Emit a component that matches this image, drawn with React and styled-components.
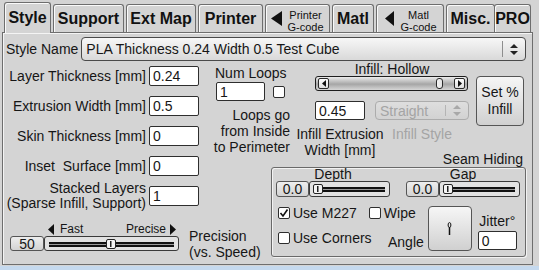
import React from 'react'
import styled, { createGlobalStyle } from 'styled-components'

const GlobalStyle = createGlobalStyle`
  html, body { margin: 0; padding: 0; }
  body {
    background: #d4d4d4;
    font-family: "Liberation Sans", Arial, sans-serif;
    color: #161616;
  }
`

const Frame = styled.div`
  width: 539px;
  height: 270px;
  overflow: hidden;
  display: flex;
  flex-direction: column;
  background: #d4d4d4;
`

const TabBar = styled.div`
  position: relative;
  z-index: 1;
  display: flex;
  align-items: flex-end;
  gap: 2px;
  height: 32px;
  padding-left: 4px;
  box-sizing: border-box;
`

const Tab = styled.div`
  width: ${p => p.$w}px;
  height: ${p => (p.$active ? 31 : 28)}px;
  margin-bottom: ${p => (p.$active ? -1 : 0)}px;
  margin-left: ${p => (p.$flush ? -3 : 0)}px;
  box-sizing: border-box;
  border: 1px solid #6e6e6e;
  border-bottom: none;
  border-radius: 3px 3px 0 0;
  box-shadow: inset 1px 1px 0 #fafafa;
  background: #d4d4d4;
  display: flex;
  align-items: center;
  justify-content: ${p => (p.$arrow ? 'flex-start' : 'center')};
  padding-left: ${p => p.$pad || 0}px;
  font-size: 16px;
  font-weight: bold;
  color: #111;
`

const TabLines = styled.div`
  flex: 1;
  padding-top: 4px;
  font-size: 11px;
  font-weight: normal;
  line-height: 12px;
  text-align: center;
`

const Panel = styled.div`
  margin-left: 2px;
  width: 531px;
  height: 233px;
  box-sizing: border-box;
  border: 1px solid #6e6e6e;
  box-shadow: inset 1px 1px 0 #f4f4f4;
  display: flex;
  flex-direction: column;
`

const BlueStrip = styled.div`
  margin-top: 1px;
  height: 4px;
  background: #c5d9ee;
`

const StyleRow = styled.div`
  margin-top: 4px;
  height: 24px;
  display: flex;
  align-items: center;
  padding-left: 3px;
`

const Text = styled.span`
  font-size: ${p => p.$size || 14}px;
  line-height: ${p => p.$lh || 16}px;
  white-space: pre;
  color: ${p => (p.$muted ? '#a4a4a4' : '#161616')};
  text-align: ${p => p.$align || 'left'};
`

const Select = styled.div`
  width: ${p => p.$w}px;
  height: ${p => p.$h}px;
  margin-left: ${p => p.$ml || 0}px;
  box-sizing: border-box;
  display: flex;
  align-items: center;
  padding-left: 4px;
  border: 1px solid ${p => (p.$disabled ? '#acacac' : '#4a4a4a')};
  border-radius: 4px;
  background: ${p =>
    p.$disabled ? 'linear-gradient(#dedede, #d2d2d2)' : 'linear-gradient(#f7f7f7, #d9d9d9)'};
  font-size: 14px;
  color: ${p => (p.$disabled ? '#a4a4a4' : '#161616')};
  white-space: nowrap;
`

const SelectArrows = styled.div`
  margin-left: auto;
  width: 22px;
  height: calc(100% - 6px);
  border-left: 1px solid ${p => (p.$disabled ? '#b4b4b4' : '#8e8e8e')};
  display: flex;
  align-items: center;
  justify-content: center;
`

const Body = styled.div`
  margin-top: 1px;
  display: grid;
  grid-template-columns: 197px 68px 32px 232px;
  grid-template-rows: 88px 62px 52px;
`

const FieldsArea = styled.div`
  grid-column: 1;
  grid-row: 1 / span 2;
  padding: 4px 1px 0 0;
  display: flex;
  flex-direction: column;
  gap: 10px;
`

const FieldRow = styled.div`
  display: flex;
  justify-content: flex-end;
  align-items: center;
  gap: 3px;
  margin-top: ${p => (p.$tall ? -5 : 0)}px;
`

const Input = styled.input`
  width: ${p => p.$w}px;
  height: ${p => p.$h || 20}px;
  margin: 0;
  box-sizing: border-box;
  border: 1px solid #2e2e2e;
  border-radius: 2px;
  padding: 0 3px;
  background: #fff;
  font-family: "Liberation Sans", Arial, sans-serif;
  font-size: 14px;
  color: #161616;
  outline: none;
`

const MidArea = styled.div`
  grid-column: 2 / span 2;
  grid-row: 1;
  display: flex;
  flex-direction: column;
  align-items: flex-start;
`

const LoopsRow = styled.div`
  margin: 1px 0 0 16px;
  display: flex;
  align-items: center;
  gap: 8px;
`

const InfillArea = styled.div`
  grid-column: 4;
  grid-row: 1;
  padding-left: 15px;
  display: flex;
  align-items: flex-start;
`

const InfillMain = styled.div`
  width: 154px;
  display: flex;
  flex-direction: column;
`

const ScrollBar = styled.div`
  position: relative;
  width: 153px;
  height: 15px;
  box-sizing: border-box;
  border: 1px solid #1e1e1e;
  border-radius: 3px;
  background: linear-gradient(#ececec, #a6a6a6 55%, #d6d6d6);
  display: flex;
  align-items: center;
  justify-content: space-between;
  padding: 0 2px;
`

const ScrollBtn = styled.div`
  width: 11px;
  height: 11px;
  box-sizing: border-box;
  border: 1px solid #2a2a2a;
  border-radius: 2px;
  background: linear-gradient(#fdfdfd, #dedede);
  display: flex;
  align-items: center;
  justify-content: center;
`

const ScrollThumb = styled.div`
  position: absolute;
  top: 1px;
  bottom: 1px;
  width: 7px;
  box-sizing: border-box;
  border: 1px solid #2a2a2a;
  border-radius: 3px;
  background: linear-gradient(90deg, #f4f4f4, #e2e2e2);
`

const ControlsRow = styled.div`
  margin-top: 10px;
  display: flex;
  gap: 10px;
`

const ControlCol = styled.div`
  width: ${p => p.$w}px;
  display: flex;
  flex-direction: column;
  align-items: center;
  gap: 6px;
`

const Button = styled.div`
  width: ${p => p.$w}px;
  height: ${p => p.$h}px;
  margin: ${p => p.$m || 0};
  box-sizing: border-box;
  border: 1px solid #555;
  border-radius: 4px;
  background: linear-gradient(#f6f6f6, #d0d0d0);
  display: flex;
  align-items: center;
  justify-content: center;
  font-size: 14px;
  line-height: 17px;
  text-align: center;
`

const SeamArea = styled.div`
  grid-column: 3 / span 2;
  grid-row: 2 / span 2;
  display: flex;
  flex-direction: column;
`

const Group = styled.div`
  margin: 1px 6px 0 3px;
  height: 90px;
  box-sizing: border-box;
  border: 1px solid #6a6a6a;
  border-radius: 3px;
  box-shadow: inset 1px 1px 0 #f2f2f2, 1px 1px 0 #f2f2f2;
  padding: 0 5px 0 4px;
  display: flex;
  flex-direction: column;
`

const SliderPair = styled.div`
  display: flex;
  gap: 16px;
`

const SliderCol = styled.div`
  width: 114px;
  display: flex;
  flex-direction: column;
  align-items: stretch;
`

const SliderBox = styled.div`
  display: flex;
  height: ${p => p.$h}px;
`

const ValueBox = styled.div`
  width: ${p => p.$w}px;
  box-sizing: border-box;
  border: 1px solid #555;
  border-radius: 3px;
  background: linear-gradient(#eeeeee, #d3d3d3);
  display: flex;
  align-items: center;
  justify-content: center;
  font-size: 14px;
`

const Track = styled.div`
  position: relative;
  flex: 1;
  box-sizing: border-box;
  border: 1px solid #3a3a3a;
  border-radius: 3px;
  background: #e2e2e2;

  &::before {
    content: '';
    position: absolute;
    left: 4px;
    right: 4px;
    top: calc(50% - 2px);
    height: 1px;
    border-top: 2px solid #111;
    border-bottom: 2px solid #111;
    background: #9a9a9a;
  }
`

const Thumb = styled.div`
  position: absolute;
  top: 50%;
  transform: translateY(-50%);
  width: 10px;
  height: 10px;
  box-sizing: border-box;
  border: 1px solid #222;
  border-radius: 2px;
  background: #f4f4f4;
  display: flex;
  align-items: center;
  justify-content: center;

  &::after {
    content: '';
    width: 2px;
    height: 6px;
    border-left: 1px solid #222;
    border-right: 1px solid #888;
    box-sizing: border-box;
  }
`

const SeamBottom = styled.div`
  margin-top: 9px;
  display: flex;
  align-items: flex-start;
`

const ChecksCol = styled.div`
  width: 110px;
  padding-left: 2px;
  display: flex;
  flex-direction: column;
  gap: 11px;
`

const CheckRow = styled.div`
  display: flex;
  gap: 12px;
`

const CheckItem = styled.div`
  height: 14px;
  display: flex;
  align-items: center;
  gap: 3px;
`

const Box = styled.div`
  width: 12px;
  height: 12px;
  box-sizing: border-box;
  border: 1px solid #2e2e2e;
  border-radius: 2px;
  background: #fff;
  display: flex;
  align-items: center;
  justify-content: center;
`

const AngleLabel = styled(Text)`
  align-self: flex-end;
  margin-bottom: 1px;
`

const JitterCol = styled.div`
  align-self: flex-end;
  margin: 0 0 1px 6px;
  width: 39px;
  display: flex;
  flex-direction: column;
  align-items: center;
  gap: 2px;
`

const PrecisionArea = styled.div`
  grid-column: 1 / span 2;
  grid-row: 3;
  padding: 10px 0 0 7px;
  display: flex;
  align-items: flex-start;
`

const PrecisionSlider = styled.div`
  width: 169px;
  display: flex;
  flex-direction: column;
`

const SpeedRow = styled.div`
  margin-left: 38px;
  width: 128px;
  height: 14px;
  display: flex;
  justify-content: space-between;
  align-items: center;
  font-size: 12px;
`

const SpeedTag = styled.span`
  display: flex;
  align-items: center;
  gap: ${p => p.$gap}px;
`

const Tri = ({ dir = 'left', w = 6, h = 11 }) => (
  <svg width={w} height={h} viewBox={`0 0 ${w} ${h}`}>
    <polygon
      points={dir === 'left' ? `${w},0 0,${h / 2} ${w},${h}` : `0,0 ${w},${h / 2} 0,${h}`}
      fill="#111"
    />
  </svg>
)

const UpDown = ({ color = '#222' }) => (
  <svg width="8" height="11" viewBox="0 0 8 11">
    <polygon points="0,4 4,0 8,4" fill={color} />
    <polygon points="0,7 8,7 4,11" fill={color} />
  </svg>
)

const Tick = () => (
  <svg width="10" height="10" viewBox="0 0 10 10">
    <polyline points="1.5,5 4,8 8.5,1.5" fill="none" stroke="#111" strokeWidth="1.6" />
  </svg>
)

const Needle = () => (
  <svg width="5" height="14" viewBox="0 0 5 14">
    <ellipse cx="2.5" cy="3" rx="1.4" ry="2.4" fill="none" stroke="#111" strokeWidth="1" />
    <line x1="2.5" y1="5" x2="2.5" y2="13" stroke="#111" strokeWidth="1.5" />
  </svg>
)

function Slider({ value, boxW, h, pct }) {
  return (
    <SliderBox $h={h}>
      <ValueBox $w={boxW}>{value}</ValueBox>
      <Track>
        <Thumb style={{ left: `calc(3px + ${pct} * (100% - 18px))` }} />
      </Track>
    </SliderBox>
  )
}

function Check({ label, checked }) {
  return (
    <CheckItem>
      <Box>{checked && <Tick />}</Box>
      <Text>{label}</Text>
    </CheckItem>
  )
}

const tabs = [
  { label: 'Style', w: 47, active: true },
  { label: 'Support', w: 71 },
  { label: 'Ext Map', w: 70 },
  { label: 'Printer', w: 65 },
  { lines: ['Printer', 'G-code'], w: 65, pad: 5, tri: 11 },
  { label: 'Matl', w: 42 },
  { lines: ['Matl', 'G-code'], w: 68, pad: 8, tri: 9 },
  { label: 'Misc.', w: 49 },
  { label: 'PRO', w: 37, flush: true },
]

const fields = [
  { label: 'Layer Thickness [mm]', value: '0.24' },
  { label: 'Extrusion Width [mm]', value: '0.5' },
  { label: 'Skin Thickness [mm]', value: '0' },
  { label: 'Inset  Surface [mm]', value: '0' },
  { label: 'Stacked Layers\n(Sparse Infill, Support)', value: '1', tall: true },
]

export default function App() {
  return (
    <Frame>
      <GlobalStyle />
      <TabBar>
        {tabs.map((t, i) => (
          <Tab key={i} $w={t.w} $active={t.active} $flush={t.flush} $arrow={!!t.lines} $pad={t.pad}>
            {t.lines ? (
              <>
                <Tri w={t.tri} h={15} />
                <TabLines>
                  {t.lines[0]}
                  <br />
                  {t.lines[1]}
                </TabLines>
              </>
            ) : (
              t.label
            )}
          </Tab>
        ))}
      </TabBar>

      <Panel>
        <StyleRow>
          <Text>Style Name</Text>
          <Select $w={445} $h={24} $ml={3}>
            PLA Thickness 0.24 Width 0.5 Test Cube
            <SelectArrows>
              <UpDown />
            </SelectArrows>
          </Select>
        </StyleRow>

        <Body>
          <FieldsArea>
            {fields.map(f => (
              <FieldRow key={f.label} $tall={f.tall}>
                <Text $align="right" $lh={f.tall ? 15 : 16}>
                  {f.label}
                </Text>
                <Input $w={50} readOnly value={f.value} />
              </FieldRow>
            ))}
          </FieldsArea>

          <MidArea>
            <Text style={{ margin: '3px 0 0 15px' }}>Num Loops</Text>
            <LoopsRow>
              <Input $w={49} $h={19} readOnly value="1" />
              <Box />
            </LoopsRow>
            <Text $align="right" style={{ width: 90, marginTop: 6 }}>
              {'Loops go\nfrom Inside\nto Perimeter'}
            </Text>
          </MidArea>

          <InfillArea>
            <InfillMain>
              <Text $lh={14} $align="center">
                Infill: Hollow
              </Text>
              <ScrollBar>
                <ScrollBtn>
                  <Tri w={4} h={7} />
                </ScrollBtn>
                <ScrollThumb style={{ left: '120px' }} />
                <ScrollBtn>
                  <Tri dir="right" w={4} h={7} />
                </ScrollBtn>
              </ScrollBar>
              <ControlsRow>
                <ControlCol $w={50}>
                  <Input $w={50} $h={19} readOnly value="0.45" />
                  <Text $align="center">{'Infill Extrusion\nWidth [mm]'}</Text>
                </ControlCol>
                <ControlCol $w={94}>
                  <Select $w={94} $h={19} $disabled>
                    Straight
                    <SelectArrows $disabled>
                      <UpDown color="#a8a8a8" />
                    </SelectArrows>
                  </Select>
                  <Text $muted $align="center">
                    Infill Style
                  </Text>
                </ControlCol>
              </ControlsRow>
            </InfillMain>
            <Button $w={48} $h={50} $m="14px 0 0 7px">
              Set %<br />
              Infill
            </Button>
          </InfillArea>

          <SeamArea>
            <Text $lh={14} $align="right" style={{ padding: '2px 9px 0 0' }}>
              Seam Hiding
            </Text>
            <Group>
              <SliderPair>
                <SliderCol>
                  <Text $lh={13} $align="center">Depth</Text>
                  <Slider value="0.0" boxW={33} h={16} pct={0} />
                </SliderCol>
                <SliderCol>
                  <Text $lh={13} $align="center">Gap</Text>
                  <Slider value="0.0" boxW={33} h={16} pct={0} />
                </SliderCol>
              </SliderPair>
              <SeamBottom>
                <ChecksCol>
                  <CheckRow>
                    <Check label="Use M227" checked />
                    <Check label="Wipe" />
                  </CheckRow>
                  <CheckRow>
                    <Check label="Use Corners" />
                  </CheckRow>
                </ChecksCol>
                <AngleLabel>Angle</AngleLabel>
                <Button $w={44} $h={45} $m="0 0 0 4px">
                  <Needle />
                </Button>
                <JitterCol>
                  <Text>Jitter°</Text>
                  <Input $w={39} $h={19} readOnly value="0" />
                </JitterCol>
              </SeamBottom>
            </Group>
          </SeamArea>

          <PrecisionArea>
            <PrecisionSlider>
              <SpeedRow>
                <SpeedTag $gap={6}>
                  <Tri /> Fast
                </SpeedTag>
                <SpeedTag $gap={4}>
                  Precise <Tri dir="right" />
                </SpeedTag>
              </SpeedRow>
              <Slider value="50" boxW={34} h={15} pct={0.5} />
            </PrecisionSlider>
            <Text style={{ margin: '6px 0 0 10px' }}>{'Precision\n(vs. Speed)'}</Text>
          </PrecisionArea>
        </Body>
      </Panel>
      <BlueStrip />
    </Frame>
  )
}
